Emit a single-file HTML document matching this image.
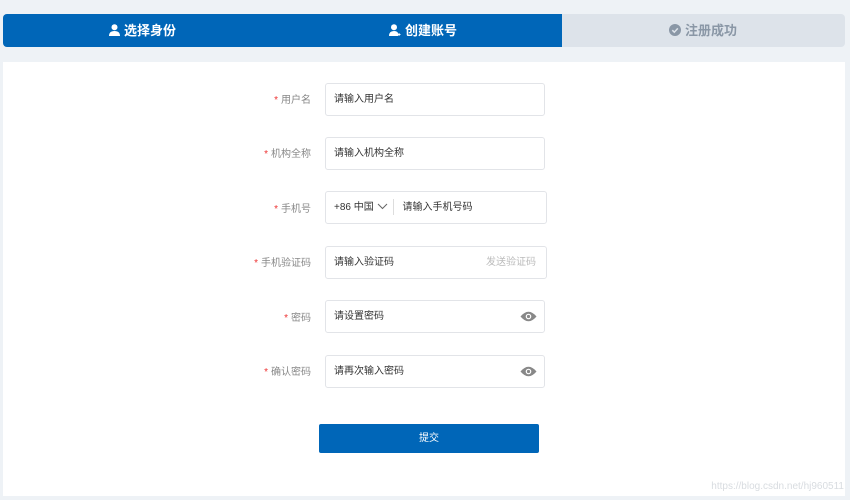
<!DOCTYPE html><html><head><meta charset="utf-8"><style>
body{margin:0;width:850px;height:500px;background:#eef2f6;font-family:"Liberation Sans","Noto Sans CJK SC",sans-serif;position:relative;overflow:hidden}
.bar{position:absolute;left:3px;top:14px;width:842px;height:33px;border-radius:4px;background:#dde3ea;overflow:hidden}
.blue{position:absolute;left:0;top:0;width:559px;height:33px;background:#0066b8}
.st{position:absolute;top:0;height:33px;line-height:33px;font-size:13px;font-weight:bold;color:#fff}
.panel{position:absolute;left:3px;top:62px;width:842px;height:434px;background:#fff}
.lab{position:absolute;right:539px;font-size:10px;color:#888;text-align:right}
.lab b{color:#e33;font-weight:normal;margin-right:3px}
.inp{position:absolute;left:325px;width:220px;height:33px;border:1px solid #e2e4e8;border-radius:3px;box-sizing:border-box;font-size:10px;color:#333;line-height:31px;padding-left:8px}
.inp svg.eye{position:absolute;right:7px;top:10px}
.btn{position:absolute;left:319px;top:424px;width:220px;height:29px;background:#0066b8;border-radius:2px;color:#fff;font-size:10px;text-align:center;line-height:29px}
</style></head><body>
<div class="bar"><div class="blue"></div>
<div class="st" style="left:106px"><svg width="11" height="12" viewBox="0 0 11 12" style="vertical-align:-1px;margin-right:4px"><circle cx="5.5" cy="3.2" r="3" fill="#fff"/><path d="M0 12 Q0 7 5.5 7 Q11 7 11 12Z" fill="#fff"/></svg>选择身份</div>
<div class="st" style="left:386px"><svg width="12" height="12" viewBox="0 0 12 12" style="vertical-align:-1px;margin-right:4px"><circle cx="5" cy="3.2" r="3" fill="#fff"/><path d="M0 12 Q0 7 5 7 Q8 7 9 9 L9 12Z" fill="#fff"/><path d="M10 9v3M8.5 10.5h3" stroke="#fff"/></svg>创建账号</div>
<div class="st" style="left:666px;color:#8a97a6"><svg width="12" height="12" viewBox="0 0 12 12" style="vertical-align:-1px;margin-right:4px"><circle cx="6" cy="6" r="6" fill="#8a97a6"/><path d="M3.3 6.2l2 2 3.5-3.8" stroke="#dde3ea" stroke-width="1.5" fill="none"/></svg>注册成功</div>
</div>
<div class="panel"></div>
<div class="lab" style="top:91px"><b>*</b>用户名</div>
<div class="inp" style="top:83px">请输入用户名</div>
<div class="lab" style="top:145px"><b>*</b>机构全称</div>
<div class="inp" style="top:137px">请输入机构全称</div>
<div class="lab" style="top:200px"><b>*</b>手机号</div>
<div class="inp" style="top:191px;width:222px">+86 中国 <svg width="11" height="7" viewBox="0 0 11 7" style="vertical-align:0"><path d="M1 1l4.5 4.5L10 1" stroke="#666" fill="none"/></svg><span style="display:inline-block;width:1px;height:16px;background:#ddd;vertical-align:middle;margin:0 9px 0 5px"></span>请输入手机号码</div>
<div class="lab" style="top:254px"><b>*</b>手机验证码</div>
<div class="inp" style="top:246px;width:222px">请输入验证码<span style="position:absolute;right:10px;color:#bbb">发送验证码</span></div>
<div class="lab" style="top:309px"><b>*</b>密码</div>
<div class="inp" style="top:300px">请设置密码<svg class="eye" width="17" height="11" viewBox="0 0 17 11"><path d="M0.5 5.5Q8.5 -4 16.5 5.5Q8.5 15 0.5 5.5Z" fill="#888"/><circle cx="8.5" cy="5.5" r="2.8" fill="#fff"/><circle cx="8.5" cy="5.5" r="1.6" fill="#888"/></svg></div>
<div class="lab" style="top:363px"><b>*</b>确认密码</div>
<div class="inp" style="top:355px">请再次输入密码<svg class="eye" width="17" height="11" viewBox="0 0 17 11"><path d="M0.5 5.5Q8.5 -4 16.5 5.5Q8.5 15 0.5 5.5Z" fill="#888"/><circle cx="8.5" cy="5.5" r="2.8" fill="#fff"/><circle cx="8.5" cy="5.5" r="1.6" fill="#888"/></svg></div>
<div class="btn">提交</div>
<div style="position:absolute;right:6px;top:481px;font-size:10px;color:#d8dce0">https://blog.csdn.net/hj960511</div>
</body></html>
